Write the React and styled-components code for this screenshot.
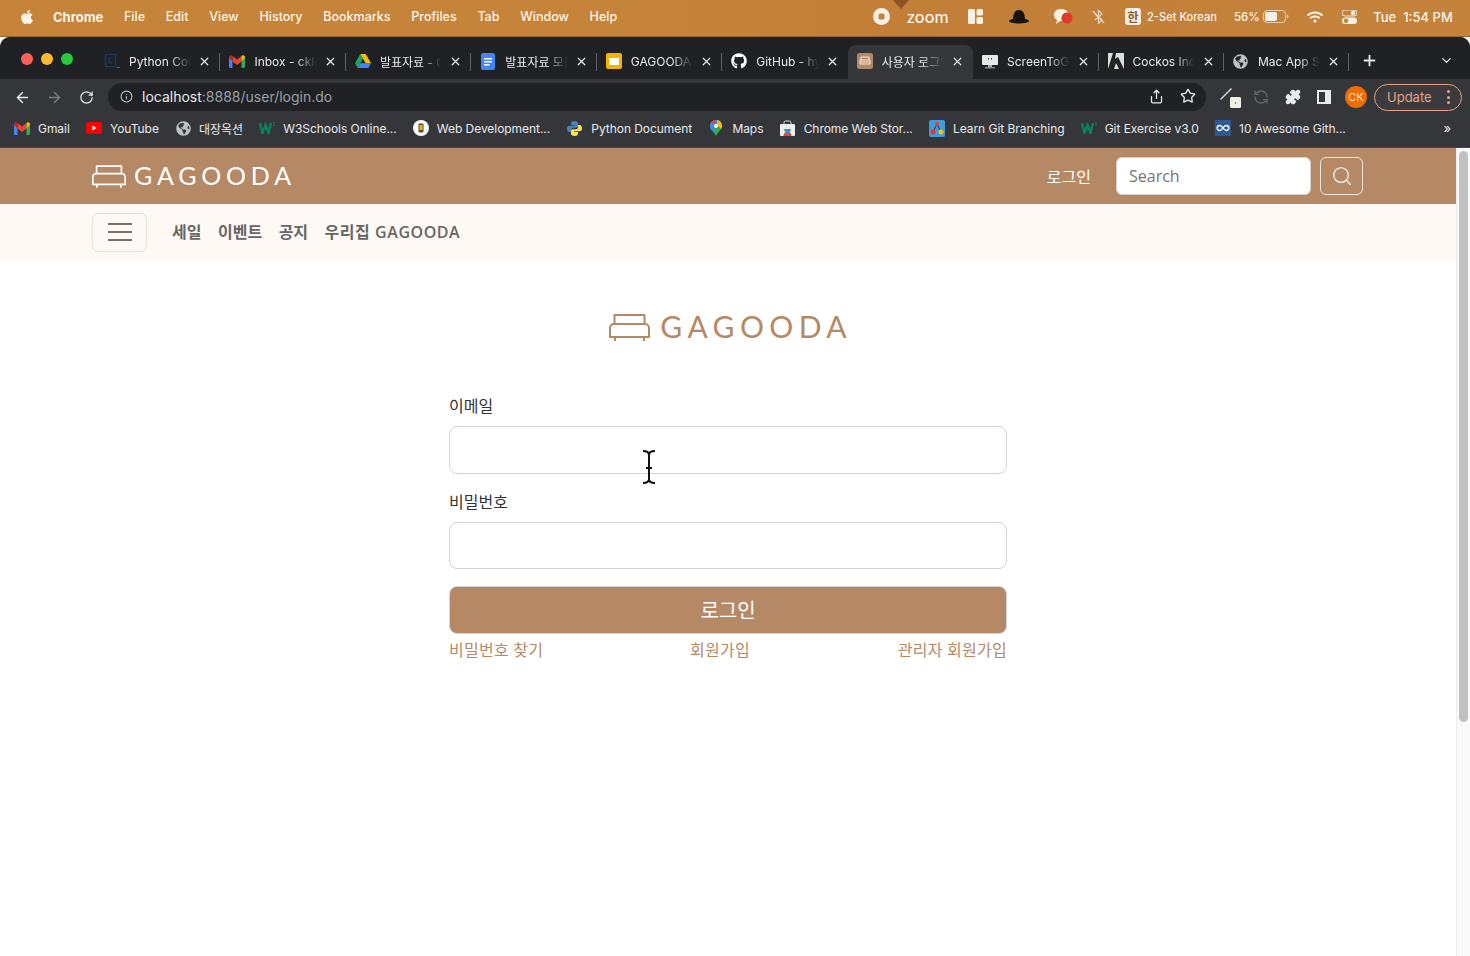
import React from 'react'
import styled, { createGlobalStyle } from 'styled-components'
import {
  ArrowLeft, ArrowRight, RotateCw, Info, Share, Star, Puzzle, X, Plus, ChevronDown, Search as SearchIcon, RefreshCcw
} from 'lucide-react'
import { FaApple, FaGithub, FaGlobeAmericas, FaWifi } from 'react-icons/fa'

const brown = '#b58966'
const sansKr = `"Open Sans", "Noto Sans CJK KR", sans-serif`
const macFont = `Inter, "Noto Sans CJK KR", sans-serif`

const GlobalStyle = createGlobalStyle`
  * { box-sizing: border-box; }
  html, body { margin: 0; padding: 0; background: #fff; }
  #root { width: 1470px; height: 956px; overflow: hidden; }
`

const Screen = styled.div`
  position: relative;
  display: flex;
  flex-direction: column;
  width: 1470px;
  height: 956px;
  background: #fff;
`

/* mac menu bar */
const MenuBar = styled.div`
  position: relative;
  display: flex;
  align-items: center;
  flex: 0 0 37px;
  padding: 0 10px 3px 19px;
  background: linear-gradient(90deg, #c58439 0%, #c6843a 45%, #c27f38 60%, #c5823b 100%);
  border-bottom: 1px solid #9a6228;
  color: #fbf4ea;
  font: 500 12.5px ${macFont};
`

const Notch = styled.div`
  position: absolute;
  top: 0;
  left: 893px;
  width: 16px;
  height: 9px;
  background: #8a5426;
  clip-path: polygon(0 0, 100% 0, 50% 100%);
`

const AppleSlot = styled.div`
  display: flex;
  width: 34px;
  font-size: 16px;
`

const AppName = styled.span`
  width: 71px;
  font-size: 13px;
  font-weight: 700;
`

const MenuItem = styled.span`
  margin-right: 20.75px;
`

const StatusArea = styled.div`
  display: flex;
  align-items: center;
  margin-left: auto;
`

const StatusSlot = styled.div`
  display: flex;
  align-items: center;
  justify-content: ${p => p.$left ? 'flex-start' : 'center'};
  width: ${p => p.$w}px;
  font-size: ${p => p.$size || 12}px;
`

const ZoomLogo = styled.span`
  font: 500 17px Lato, sans-serif;
  letter-spacing: 0.2px;
`

const Hangul = styled.span`
  display: flex;
  align-items: center;
  justify-content: center;
  width: 16px;
  height: 17px;
  border-radius: 3px;
  background: #f7efe4;
  color: #8a6030;
  font: 700 12px "Noto Sans CJK KR", sans-serif;
`

/* chrome window */
const Chrome = styled.div`
  display: flex;
  flex-direction: column;
  flex: 0 0 111px;
  border-radius: 10px 10px 0 0;
  background: #35363a;
  overflow: hidden;
  color: #e8eaed;
  font-family: ${macFont};
`

const TabStrip = styled.div`
  display: flex;
  align-items: flex-end;
  flex: 0 0 42px;
  background: #202124;
`

const Traffic = styled.div`
  display: flex;
  align-items: center;
  gap: 8px;
  align-self: flex-start;
  flex: 0 0 95px;
  padding: 16px 0 0 21px;
`

const Light = styled.span`
  width: 12px;
  height: 12px;
  border-radius: 50%;
  background: ${p => p.$color};
`

const Tab = styled.div`
  position: relative;
  display: flex;
  align-items: center;
  flex: 0 0 125.45px;
  min-width: 0;
  height: 34px;
  padding: 0 9px 2px 9px;
  border-radius: 8px 8px 0 0;
  background: ${p => p.$active ? '#35363a' : 'transparent'};
  &::after {
    content: '';
    display: ${p => p.$sep ? 'block' : 'none'};
    position: absolute;
    right: 0;
    top: 8px;
    width: 1px;
    height: 18px;
    background: #5f6368;
  }
`

const TabIcon = styled.span`
  display: flex;
  align-items: center;
  justify-content: center;
  flex: 0 0 16px;
  height: 16px;
`

const TabTitle = styled.span`
  flex: 1;
  min-width: 0;
  margin: 0 6px 0 9px;
  overflow: hidden;
  white-space: nowrap;
  font-size: 12px;
  -webkit-mask-image: linear-gradient(90deg, #000 65%, transparent 98%);
  mask-image: linear-gradient(90deg, #000 65%, transparent 98%);
`

const StripPlus = styled.div`
  display: flex;
  align-self: center;
  margin: 5px 0 0 12px;
`

const StripChevron = styled.div`
  display: flex;
  align-self: center;
  margin: 5px 0 0 61px;
`

const Toolbar = styled.div`
  display: flex;
  align-items: center;
  flex: 0 0 32px;
  padding: 4px 8px 0 6px;
`

const NavBtn = styled.span`
  display: flex;
  justify-content: center;
  flex: 0 0 32px;
  color: ${p => p.$dim ? '#7a7d82' : '#e8eaed'};
`

const Omnibox = styled.div`
  display: flex;
  align-items: center;
  flex: 0 0 1098px;
  height: 28px;
  margin: 0 8px 0 6px;
  padding: 0 10px 2px 12px;
  border-radius: 14px;
  background: #202124;
`

const Url = styled.span`
  margin-left: 9px;
  font-size: 14px;
  color: #9aa0a6;
  b { font-weight: 400; color: #e8eaed; }
`

const OmniActions = styled.div`
  display: flex;
  align-items: center;
  gap: 16px;
  margin-left: auto;
`

const ExtSlot = styled.span`
  position: relative;
  display: flex;
  justify-content: center;
  flex: 0 0 31.5px;
  color: ${p => p.$dim ? '#62656a' : '#e8eaed'};
`

const Avatar = styled.span`
  display: flex;
  align-items: center;
  justify-content: center;
  flex: 0 0 22px;
  height: 22px;
  margin: 0 7px 0 5px;
  border-radius: 50%;
  background: #ef6c00;
  color: #fbe4d0;
  font-size: 11px;
`

const UpdatePill = styled.div`
  display: flex;
  align-items: center;
  justify-content: space-between;
  width: 88px;
  height: 27px;
  padding: 0 11px 0 12px;
  border: 1px solid #e8a18d;
  border-radius: 14px;
  background: #3b3a3d;
  color: #e8a18d;
  font-size: 13px;
`

const Kebab = styled.span`
  display: flex;
  flex-direction: column;
  gap: 2.5px;
  i {
    width: 3px;
    height: 3px;
    border-radius: 50%;
    background: #e8a18d;
  }
`

const BookmarkBar = styled.div`
  display: flex;
  align-items: center;
  flex: 0 0 37px;
  padding: 0 19px 2px 14px;
  border-bottom: 1px solid #46474b;
`

const Bookmark = styled.div`
  display: flex;
  align-items: center;
  gap: 8px;
  margin-right: 16.2px;
  font-size: 12px;
  letter-spacing: -0.05px;
  white-space: nowrap;
`

const BookmarkMore = styled.span`
  margin-left: auto;
  font-size: 13px;
`

/* page */
const Viewport = styled.div`
  display: flex;
  flex: 1;
  min-height: 0;
`

const Main = styled.div`
  flex: 1;
  min-width: 0;
  font-family: ${sansKr};
`

const Scrollbar = styled.div`
  flex: 0 0 14px;
  padding: 3px 2px 0;
  border-left: 1px solid #ececec;
  background: #fafafa;
`

const Thumb = styled.div`
  height: 571px;
  border-radius: 5px;
  background: #c1c1c1;
`

const Header = styled.header`
  display: flex;
  align-items: center;
  height: 56px;
  padding: 0 93px 0 92px;
  background: ${brown};
`

const Logo = styled.div`
  display: flex;
  align-items: center;
  gap: ${p => p.$big ? 10 : 8}px;
  color: ${p => p.$color};
`

const LogoText = styled.span`
  margin-right: -${p => p.$spacing}px;
  padding-bottom: 2px;
  font: 400 ${p => p.$size}px Lato, sans-serif;
  letter-spacing: ${p => p.$spacing}px;
  line-height: 1;
`

const LoginLink = styled.a`
  margin-left: auto;
  color: #fff;
  font-size: 16px;
`

const SearchInput = styled.input`
  width: 195px;
  height: 38px;
  margin-left: 25px;
  padding: 0 12px;
  border: 1px solid #d8d2cc;
  border-radius: 6px;
  background: #fff;
  font: 16px ${sansKr};
  color: #333;
  &::placeholder { color: #757575; opacity: 1; }
`

const SearchButton = styled.button`
  display: flex;
  align-items: center;
  justify-content: center;
  width: 43px;
  height: 38px;
  margin-left: 9px;
  padding: 0;
  border: 1px solid #f2e6da;
  border-radius: 6px;
  background: transparent;
  color: #fff;
`

const SubNav = styled.nav`
  display: flex;
  align-items: center;
  height: 56px;
  padding: 0 92px 2px;
  background: #fef9f5;
`

const Burger = styled.button`
  display: flex;
  flex-direction: column;
  align-items: center;
  justify-content: center;
  gap: 6px;
  width: 55px;
  height: 39px;
  margin: 2px 25px 0 0;
  padding: 0;
  border: 1px solid #e6e1dc;
  border-radius: 6px;
  background: transparent;
  i {
    width: 24px;
    height: 2px;
    background: #7a7068;
  }
`

const NavLink = styled.a`
  margin-right: 16.5px;
  color: #666;
  font-size: 16px;
  font-weight: 600;
  letter-spacing: ${p => p.$wide ? '0.55px' : '0'};
`

const LoginPanel = styled.section`
  display: flex;
  flex-direction: column;
  align-items: center;
  padding-top: 51px;
`

const Form = styled.form`
  display: flex;
  flex-direction: column;
  width: 558px;
  margin-top: 50px;
`

const Label = styled.label`
  margin-bottom: 8px;
  padding-top: 1px;
  color: #333;
  font-size: 16px;
  line-height: 24px;
`

const Field = styled.input`
  height: 47.5px;
  margin-bottom: 15px;
  border: 1px solid #ced4da;
  border-radius: 8px;
  background: #fff;
`

const Submit = styled.button`
  height: 47.5px;
  margin-top: 2px;
  border: 1px solid #ced4da;
  border-radius: 8px;
  background: ${brown};
  color: #fff;
  font: 20px ${sansKr};
`

const FormLinks = styled.div`
  display: grid;
  grid-template-columns: 1fr 1fr 1fr;
  margin-top: 4.5px;
  color: ${brown};
  font-size: 16px;
  letter-spacing: 0.25px;
  line-height: 24px;
  span:nth-child(2) { text-align: center; padding-right: 16px; }
  span:nth-child(3) { text-align: right; }
`

const Cursor = styled.svg`
  position: absolute;
  left: 641px;
  top: 450px;
`

const Sofa = ({ width, height }) => (
  <svg width={width} height={height} viewBox="0 0 41 27" fill="none" stroke="currentColor" strokeWidth="2" strokeLinejoin="round">
    <path d="M5.500 10V1h30v9" />
    <path d="M5 10h31a4 4 0 0 1 4 4v9H1v-9a4 4 0 0 1 4-4z" />
    <path d="M6 23v4M35 23v4" />
  </svg>
)

const GmailIcon = () => (
  <svg width="16" height="13" viewBox="0 0 16 13">
    <path d="M0 2v9.500A1.500 1.500 0 0 0 1.500 13H3.500V5.500z" fill="#4285f4" />
    <path d="M16 2v9.500a1.500 1.500 0 0 1-1.500 1.500h-2V5.500z" fill="#34a853" />
    <path d="M3.500 6.500V1L8 4.500 12.500 1v5.500L8 10z" fill="#ea4335" />
    <path d="M0 2.500C0 .5 2.200-.5 3.500 1v5.500z" fill="#c5221f" />
    <path d="M16 2.500c0-2-2.200-3-3.500-1.500v5.500z" fill="#fbbc04" />
  </svg>
)

const YoutubeIcon = () => (
  <svg width="16" height="12" viewBox="0 0 16 12">
    <rect width="16" height="12" rx="3" fill="#f00" />
    <path d="M6.500 3.500v5l4-2.500z" fill="#fff" />
  </svg>
)

const DriveIcon = () => (
  <svg width="16" height="14" viewBox="0 0 16 14">
    <path d="M5.300 0h5.400l5.300 9.200h-5.400z" fill="#fbbc04" />
    <path d="M5.300 0L0 9.200 2.700 14l5.300-9.300z" fill="#1ea362" />
    <path d="M5.300 9.200H16L13.300 14H2.700z" fill="#4285f4" />
  </svg>
)

const DocsIcon = () => (
  <svg width="14" height="17" viewBox="0 0 14 17">
    <rect width="14" height="17" rx="2" fill="#4285f4" />
    <path d="M3 5h8v1.500H3zM3 8h8v1.500H3zM3 11h5.500v1.500H3z" fill="#fff" />
  </svg>
)

const SlidesIcon = () => (
  <svg width="16" height="16" viewBox="0 0 16 16">
    <rect width="16" height="16" rx="2" fill="#f4b400" />
    <rect x="3" y="5" width="10" height="7" fill="#fff" />
  </svg>
)

const PythonCourseIcon = () => (
  <svg width="16" height="16" viewBox="0 0 16 16" fill="none" stroke="#1d3a57" strokeWidth="1.200">
    <path d="M1.500 1.500h10v12h-10z" />
    <path d="M8.500 5H5v5h3.500" />
    <path d="M12.500 14.500H16" stroke="#2c6a9a" />
  </svg>
)

const ActiveTabIcon = () => (
  <svg width="16" height="16" viewBox="0 0 16 16" fill="none">
    <rect width="16" height="16" rx="2.500" fill="#b58966" />
    <path d="M4 7V4h8v3M3 7h10v4H3zM3 9h10" stroke="#f4e7dc" strokeWidth="1" />
  </svg>
)

const ScreenIcon = () => (
  <svg width="16" height="15" viewBox="0 0 16 15">
    <rect x="0" y="1" width="16" height="10" rx="1" fill="#e8e8e8" />
    <rect x="6" y="11" width="4" height="2" fill="#aaa" />
    <rect x="3" y="13" width="10" height="1.500" fill="#888" />
    <path d="M6 4h1v1.500H6zM9 4h1v1.500H9z" fill="#444" />
  </svg>
)

const CockosIcon = () => (
  <svg width="16" height="16" viewBox="0 0 16 16">
    <rect width="16" height="16" fill="#ddd" />
    <path d="M0 16L5 0h3l-1 6 3-2 2 4 4 8h-5L8 10l-2 6z" fill="#222" />
  </svg>
)

const W3Icon = () => (
  <svg width="16" height="12" viewBox="0 0 16 12" fill="none" stroke="#04855a" strokeWidth="2.400">
    <path d="M1 1l2.500 10L6.500 3l3 8L12 1" />
    <path d="M14 .5h1.500L14.500 2l1 1.500H14" strokeWidth=".8" />
  </svg>
)

const WebDevIcon = () => (
  <svg width="16" height="16" viewBox="0 0 16 16">
    <circle cx="8" cy="8" r="8" fill="#fff" />
    <rect x="5.500" y="3.500" width="5" height="9" rx="1" fill="#5b4a3a" />
    <rect x="6.500" y="5" width="3" height="5" fill="#f4b400" />
  </svg>
)

const PythonIcon = () => (
  <svg width="17" height="17" viewBox="0 0 17 17">
    <path d="M8.500 1C5.500 1 5 2 5 3.500V5h3.700v.7H3.300C1.800 5.700 1 7 1 8.700S1.800 12 3.300 12H5v-2c0-1.300 1-2.300 2.300-2.300h3c1 0 1.800-.8 1.800-1.900V3.500C12.100 2 10.800 1 8.500 1z" fill="#4584b6" />
    <path d="M8.500 16c3 0 3.500-1 3.500-2.500V12H8.300v-.7h5.400c1.500 0 2.300-1.300 2.300-3S15.200 5 13.700 5H12v2c0 1.300-1 2.300-2.300 2.300h-3c-1 0-1.800.8-1.800 1.900v2.300C4.900 15 6.200 16 8.500 16z" fill="#ffde57" />
  </svg>
)

const MapsIcon = () => (
  <svg width="12" height="16" viewBox="0 0 12 16">
    <path d="M6 0a6 6 0 0 1 6 6c0 3.500-4 6-6 10C4 12 0 9.500 0 6a6 6 0 0 1 6-6z" fill="#34a853" />
    <path d="M6 0a6 6 0 0 1 5 2.700L2 11C1 9.500 0 8 0 6a6 6 0 0 1 6-6z" fill="#4285f4" />
    <path d="M1.200 2.400A6 6 0 0 1 6 0v4z" fill="#ea4335" />
    <path d="M12 6c0 1-.3 2-.9 2.800L7 5V0c3 .3 5 3 5 6z" fill="#fbbc04" />
    <circle cx="6" cy="6" r="2" fill="#fff" />
  </svg>
)

const StoreIcon = () => (
  <svg width="15" height="16" viewBox="0 0 15 16">
    <path d="M4 4V2.500A1.500 1.500 0 0 1 5.500 1h4A1.500 1.500 0 0 1 11 2.500V4" fill="none" stroke="#ddd" />
    <rect y="4" width="15" height="12" rx="1" fill="#eee" />
    <path d="M3.500 16a4 4 0 0 1 8 0z" fill="#ea4335" />
    <path d="M4 9h7l-1 3H5z" fill="#34a853" />
    <circle cx="7.500" cy="12" r="2" fill="#4285f4" />
  </svg>
)

const GitBranchIcon = () => (
  <svg width="16" height="17" viewBox="0 0 16 17">
    <rect width="16" height="17" rx="2" fill="#3f9bdc" />
    <path d="M8 4L4 12M8 4l4 8" stroke="#1b3a5a" strokeWidth="1" />
    <circle cx="8" cy="4" r="2" fill="#e33" />
    <circle cx="4" cy="12" r="2.500" fill="#e33" />
    <circle cx="12" cy="12" r="2.500" fill="#f4c20d" />
  </svg>
)

const AwesomeIcon = () => (
  <svg width="16" height="16" viewBox="0 0 16 16" fill="none">
    <rect width="16" height="16" fill="#2d5a94" />
    <path d="M8 8C6.800 6 5.800 5.500 4.700 5.500a2.500 2.500 0 0 0 0 5C5.800 10.500 6.800 10 8 8c1.200-2 2.200-2.500 3.300-2.500a2.500 2.500 0 0 1 0 5C10.200 10.500 9.200 10 8 8z" stroke="#fff" strokeWidth="1.400" />
  </svg>
)

const RecordIcon = () => (
  <svg width="17" height="17" viewBox="0 0 17 17">
    <circle cx="8.500" cy="8.500" r="8.500" fill="#f8f0e4" />
    <rect x="5.500" y="5.500" width="6" height="6" rx="1.500" fill="#c5823b" />
  </svg>
)

const PanelsIcon = () => (
  <svg width="15" height="15" viewBox="0 0 15 15" fill="#f8f0e4">
    <rect width="7" height="15" rx="1.500" />
    <rect x="8.500" width="6.500" height="6.500" rx="1.500" />
    <rect x="8.500" y="8" width="6.500" height="7" rx="1.500" />
  </svg>
)

const HatIcon = () => (
  <svg width="20" height="14" viewBox="0 0 20 14" fill="#18130e">
    <path d="M4 10C4 3 6.500 0 10 0s6 3 6 10z" />
    <ellipse cx="10" cy="11" rx="10" ry="2.500" />
  </svg>
)

const ChatIcon = () => (
  <svg width="20" height="17" viewBox="0 0 20 17">
    <path d="M8 1a7 6 0 0 1 7 4 6 6 0 0 0-6 8H7l-4 3 1-4A7 6 0 0 1 8 1z" fill="#f8f0e4" />
    <circle cx="14" cy="10" r="5.500" fill="#e03a2f" />
  </svg>
)

const BluetoothOffIcon = () => (
  <svg width="13" height="14" viewBox="0 0 13 14" fill="none" stroke="#ead9c2" strokeWidth="1.100">
    <path d="M3 4l7 6-3.500 3.500v-13L10 4l-7 6" />
    <path d="M1 1l11 12" strokeWidth="1.300" />
  </svg>
)

const BatteryIcon = () => (
  <svg width="26" height="13" viewBox="0 0 26 13" fill="none">
    <rect x=".5" y=".5" width="22" height="12" rx="3.500" stroke="#f8f0e4" strokeOpacity=".7" />
    <rect x="2" y="2" width="12" height="9" rx="2" fill="#f8f0e4" />
    <path d="M24 4.500c1 .3 1.500 1 1.500 2s-.5 1.700-1.500 2z" fill="#f8f0e4" fillOpacity=".7" />
  </svg>
)

const ControlIcon = () => (
  <svg width="15" height="14" viewBox="0 0 15 14">
    <rect width="15" height="6" rx="3" fill="none" stroke="#f8f0e4" />
    <circle cx="11" cy="3" r="2.200" fill="#f8f0e4" />
    <rect y="7.500" width="15" height="6.500" rx="3.200" fill="#f8f0e4" />
    <circle cx="4" cy="10.700" r="2.200" fill="#c5823b" />
  </svg>
)

const PenExtIcon = () => (
  <svg width="24" height="24" viewBox="0 0 24 24">
    <path d="M2 14L13 3l1 1L3 15z" fill="#d8d8d8" />
    <rect x="12" y="12" width="11" height="11" rx="1.500" fill="#f2efe6" />
    <circle cx="17.500" cy="18" r=".8" fill="#555" />
  </svg>
)

const SidePanelIcon = () => (
  <svg width="14" height="14" viewBox="0 0 14 14" fill="none">
    <rect x="1" y="1" width="12" height="12" stroke="#e8eaed" strokeWidth="2" />
    <rect x="8" y="1" width="5" height="12" fill="#e8eaed" />
  </svg>
)

const tabs = [
  { title: 'Python Course', icon: <PythonCourseIcon />, sep: true },
  { title: 'Inbox - cklee', icon: <GmailIcon />, sep: true },
  { title: '발표자료 - Google', icon: <DriveIcon />, sep: true },
  { title: '발표자료 모음', icon: <DocsIcon />, sep: true },
  { title: 'GAGOODA', icon: <SlidesIcon />, sep: true },
  { title: 'GitHub - hyun', icon: <FaGithub size={16} color="#fff" /> },
  { title: '사용자 로그인', icon: <ActiveTabIcon />, active: true },
  { title: 'ScreenToGif', icon: <ScreenIcon />, sep: true },
  { title: 'Cockos Inc', icon: <CockosIcon />, sep: true },
  { title: 'Mac App Store', icon: <FaGlobeAmericas size={15} color="#bdc1c6" />, sep: true }
]

const bookmarks = [
  { title: 'Gmail', icon: <GmailIcon /> },
  { title: 'YouTube', icon: <YoutubeIcon /> },
  { title: '대장옥션', icon: <FaGlobeAmericas size={15} color="#bdc1c6" /> },
  { title: 'W3Schools Online...', icon: <W3Icon /> },
  { title: 'Web Development...', icon: <WebDevIcon /> },
  { title: 'Python Document', icon: <PythonIcon /> },
  { title: 'Maps', icon: <MapsIcon /> },
  { title: 'Chrome Web Stor...', icon: <StoreIcon /> },
  { title: 'Learn Git Branching', icon: <GitBranchIcon /> },
  { title: 'Git Exercise v3.0', icon: <W3Icon /> },
  { title: '10 Awesome Gith...', icon: <AwesomeIcon /> }
]

const menus = ['File', 'Edit', 'View', 'History', 'Bookmarks', 'Profiles', 'Tab', 'Window', 'Help']

const App = () => (
  <Screen>
    <GlobalStyle />
    <MenuBar>
      <Notch />
      <AppleSlot><FaApple /></AppleSlot>
      <AppName>Chrome</AppName>
      {menus.map(m => <MenuItem key={m}>{m}</MenuItem>)}
      <StatusArea>
        <StatusSlot $w={28}><RecordIcon /></StatusSlot>
        <StatusSlot $w={66}><ZoomLogo>zoom</ZoomLogo></StatusSlot>
        <StatusSlot $w={28}><PanelsIcon /></StatusSlot>
        <StatusSlot $w={60}><HatIcon /></StatusSlot>
        <StatusSlot $w={28}><ChatIcon /></StatusSlot>
        <StatusSlot $w={42}><BluetoothOffIcon /></StatusSlot>
        <StatusSlot $w={28}><Hangul>한</Hangul></StatusSlot>
        <StatusSlot $w={87} $left $size={11.1}>2-Set Korean</StatusSlot>
        <StatusSlot $w={29} $left $size={11.5}>56%</StatusSlot>
        <StatusSlot $w={35} $left><BatteryIcon /></StatusSlot>
        <StatusSlot $w={34}><FaWifi size={16} /></StatusSlot>
        <StatusSlot $w={34}><ControlIcon /></StatusSlot>
        <StatusSlot $w={94} $size={13}>Tue&nbsp;&nbsp;1:54 PM</StatusSlot>
      </StatusArea>
    </MenuBar>
    <Chrome>
      <TabStrip>
        <Traffic>
          <Light $color="#ff5f57" />
          <Light $color="#febc2e" />
          <Light $color="#28c840" />
        </Traffic>
        {tabs.map(t => (
          <Tab key={t.title} $active={t.active} $sep={t.sep}>
            <TabIcon>{t.icon}</TabIcon>
            <TabTitle>{t.title}</TabTitle>
            <X size={13} strokeWidth={2.200} />
          </Tab>
        ))}
        <StripPlus><Plus size={17} strokeWidth={2.500} /></StripPlus>
        <StripChevron><ChevronDown size={15} /></StripChevron>
      </TabStrip>
      <Toolbar>
        <NavBtn><ArrowLeft size={17} /></NavBtn>
        <NavBtn $dim><ArrowRight size={17} /></NavBtn>
        <NavBtn><RotateCw size={15} /></NavBtn>
        <Omnibox>
          <Info size={13} color="#bdc1c6" />
          <Url><b>localhost</b>:8888/user/login.do</Url>
          <OmniActions>
            <Share size={15} />
            <Star size={16} />
          </OmniActions>
        </Omnibox>
        <ExtSlot><PenExtIcon /></ExtSlot>
        <ExtSlot $dim><RefreshCcw size={16} /></ExtSlot>
        <ExtSlot><Puzzle size={16} fill="#e8eaed" /></ExtSlot>
        <ExtSlot><SidePanelIcon /></ExtSlot>
        <Avatar>CK</Avatar>
        <UpdatePill>
          Update
          <Kebab><i /><i /><i /></Kebab>
        </UpdatePill>
      </Toolbar>
      <BookmarkBar>
        {bookmarks.map(b => (
          <Bookmark key={b.title}>
            <TabIcon>{b.icon}</TabIcon>
            {b.title}
          </Bookmark>
        ))}
        <BookmarkMore>»</BookmarkMore>
      </BookmarkBar>
    </Chrome>
    <Viewport>
      <Main>
        <Header>
          <Logo $color="#fff">
            <Sofa width={34} height={23} />
            <LogoText $size={25} $spacing={4.800}>GAGOODA</LogoText>
          </Logo>
          <LoginLink>로그인</LoginLink>
          <SearchInput placeholder="Search" />
          <SearchButton><SearchIcon size={22} strokeWidth={1.300} /></SearchButton>
        </Header>
        <SubNav>
          <Burger><i /><i /><i /></Burger>
          <NavLink>세일</NavLink>
          <NavLink>이벤트</NavLink>
          <NavLink>공지</NavLink>
          <NavLink $wide>우리집 GAGOODA</NavLink>
        </SubNav>
        <LoginPanel>
          <Logo $color={brown} $big>
            <Sofa width={41} height={27} />
            <LogoText $size={30} $spacing={5.400}>GAGOODA</LogoText>
          </Logo>
          <Form>
            <Label>이메일</Label>
            <Field type="email" />
            <Label>비밀번호</Label>
            <Field type="password" />
            <Submit type="button">로그인</Submit>
            <FormLinks>
              <span>비밀번호 찾기</span>
              <span>회원가입</span>
              <span>관리자 회원가입</span>
            </FormLinks>
          </Form>
        </LoginPanel>
      </Main>
      <Scrollbar><Thumb /></Scrollbar>
    </Viewport>
    <Cursor width="16" height="34" viewBox="0 0 16 34" fill="none" stroke="#111" strokeWidth="2">
      <path d="M2 1c3 0 6 1 6 4v24c0 3-3 4-6 4M14 1c-3 0-6 1-6 4v24c0 3 3 4 6 4M5 18h6" />
    </Cursor>
  </Screen>
)

export default App
